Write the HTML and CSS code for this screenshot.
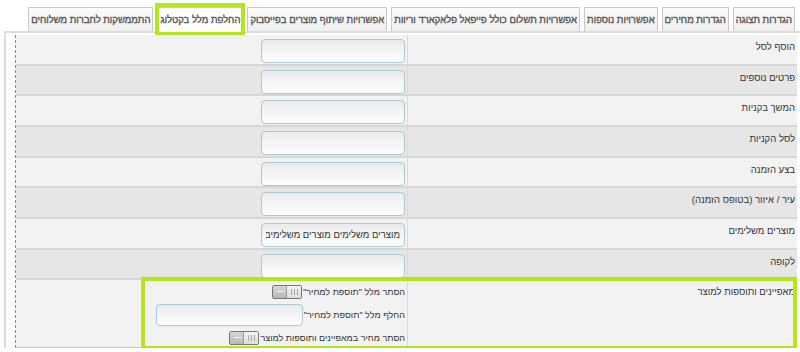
FILE: index.html
```html
<!DOCTYPE html>
<html lang="he" dir="rtl">

<head>
    <meta charset="UTF-8">
    <meta name="viewport" content="width=device-width, initial-scale=1.0">
    <title>החלפת מלל בקטלוג</title>
    <link rel="stylesheet" href="styles.css">
</head>

<body>
    <ul class="tabs">
        <li>הגדרות תצוגה</li>
        <li>הגדרות מחירים</li>
        <li>אפשרויות נוספות</li>
        <li>אפשרויות תשלום כולל פייפאל פלאקארד וריוות</li>
        <li>אפשרויות שיתוף מוצרים בפייסבוק</li>
        <li class="active">החלפת מלל בקטלוג<span class="mark"></span></li>
        <li>התממשקות לחברות משלוחים</li>
    </ul>

    <div class="panel">
        <div class="form">
            <div class="row">
                <div class="label">הוסף לסל</div>
                <div class="field"><input type="text"></div>
            </div>
            <div class="row">
                <div class="label">פרטים נוספים</div>
                <div class="field"><input type="text"></div>
            </div>
            <div class="row">
                <div class="label">המשך בקניות</div>
                <div class="field"><input type="text"></div>
            </div>
            <div class="row">
                <div class="label">לסל הקניות</div>
                <div class="field"><input type="text"></div>
            </div>
            <div class="row">
                <div class="label">בצע הזמנה</div>
                <div class="field"><input type="text"></div>
            </div>
            <div class="row">
                <div class="label">עיר / איזור (בטופס הזמנה)</div>
                <div class="field"><input type="text"></div>
            </div>
            <div class="row">
                <div class="label">מוצרים משלימים</div>
                <div class="field"><input type="text" value="מוצרים משלימים מוצרים משלימים"></div>
            </div>
            <div class="row">
                <div class="label">לקופה</div>
                <div class="field"><input type="text"></div>
            </div>
            <div class="row last">
                <div class="label">מאפיינים ותוספות למוצר</div>
                <div class="field options">
                    <div class="line">
                        <span>הסתר מלל "תוספת למחיר"</span>
                        <span class="toggle"><span class="track"></span><span class="knob"></span></span>
                    </div>
                    <div class="line">
                        <span>החלף מלל "תוספת למחיר"</span>
                        <input type="text" class="wide">
                    </div>
                    <div class="line">
                        <span>הסתר מחיר במאפיינים ותוספות למוצר</span>
                        <span class="toggle"><span class="track"></span><span class="knob"></span></span>
                    </div>
                </div>
                <span class="mark"></span>
            </div>
        </div>
    </div>
</body>

</html>
```

FILE: styles.css
```css
body {
    margin: 0;
    font-family: 'Liberation Sans', Arial, sans-serif;
    font-size: 9.5px;
    color: #333;
    background: #fff;
}

.tabs {
    display: flex;
    gap: 4px;
    margin: 0;
    padding: 7px 5px 0 0;
    list-style: none;

    li {
        position: relative;
        height: 23px;
        line-height: 23px;
        padding: 0 2px;
        border: 1px solid #c9c9c9;
        border-bottom: none;
        background: linear-gradient(#fbfbfb, #efefef);
        color: #555;
        font-size: 9.5px;
        -webkit-text-stroke: 0.35px #555;
        white-space: nowrap;
    }

    li.active {
        background: #fff;
        height: 24px;
        margin-bottom: -1px;
    }
}

.mark {
    position: absolute;
    border: 4px solid #b5e61d;
    pointer-events: none;
}

.tabs .mark {
    top: -5px;
    bottom: -4px;
    left: -3px;
    right: -3px;
}

.panel {
    margin-left: 4px;
    padding: 2px 3px 0 9px;
    border-top: 2px solid #dcdcdc;
    border-left: 2px solid #dcdcdc;
}

.form {
    border-left: 1px dashed #8a8a8a;
    border-bottom: 1px solid #c4c4c4;
}

.row {
    position: relative;
    display: grid;
    grid-template-columns: 390px 1fr;
    height: 30.67px;
    box-sizing: border-box;
    border-bottom: 2px solid #d6d6d6;
    background: #f2f2f2;

    &:nth-child(even) {
        background: #e6e6e6;
    }

    .mark {
        top: -3px;
        bottom: -3px;
        left: 125px;
        right: 0;
    }
}

.row.last {
    height: 67px;
    border-bottom: none;
}

.label {
    padding: 6px 2px 0 0;
    border-left: 1px solid #dadada;
    white-space: nowrap;
}

.field {
    padding: 4px 2px 0 0;

    input {
        display: block;
        box-sizing: border-box;
        width: 144px;
        height: 24px;
        margin: 0;
        padding: 0 4px;
        border: 1px solid #a9c8d8;
        border-radius: 4px;
        background: linear-gradient(#ebebeb, #fdfdfd);
        font-family: inherit;
        font-size: 9.5px;
        color: #333;
    }
}

.options {
    display: flex;
    flex-direction: column;
    align-items: flex-start;
    padding-top: 0;
    font-size: 9px;

    .line {
        display: flex;
        align-items: center;
        gap: 1px;
        height: 23px;
        white-space: nowrap;
    }

    input.wide {
        width: 147px;
        height: 22px;
    }
}

.toggle {
    direction: ltr;
    display: flex;
    width: 30px;
    height: 14px;
    box-sizing: border-box;
    border: 1px solid #767676;
    border-radius: 2px;
    overflow: hidden;

    .track {
        position: relative;
        flex: 1;
        background: linear-gradient(#d6d6d6, #b9b9b9);
    }

    .track::before {
        content: "";
        position: absolute;
        left: 4px;
        top: 5px;
        width: 8px;
        height: 1px;
        background: #f4f4f4;
    }

    .knob {
        width: 14px;
        border-left: 1px solid #9a9a9a;
        background:
            repeating-linear-gradient(90deg, #a8a8a8 0 1px, transparent 1px 3px) 4px 3px / 7px 6px no-repeat,
            linear-gradient(#f4f4f4, #dcdcdc);
    }
}
```
